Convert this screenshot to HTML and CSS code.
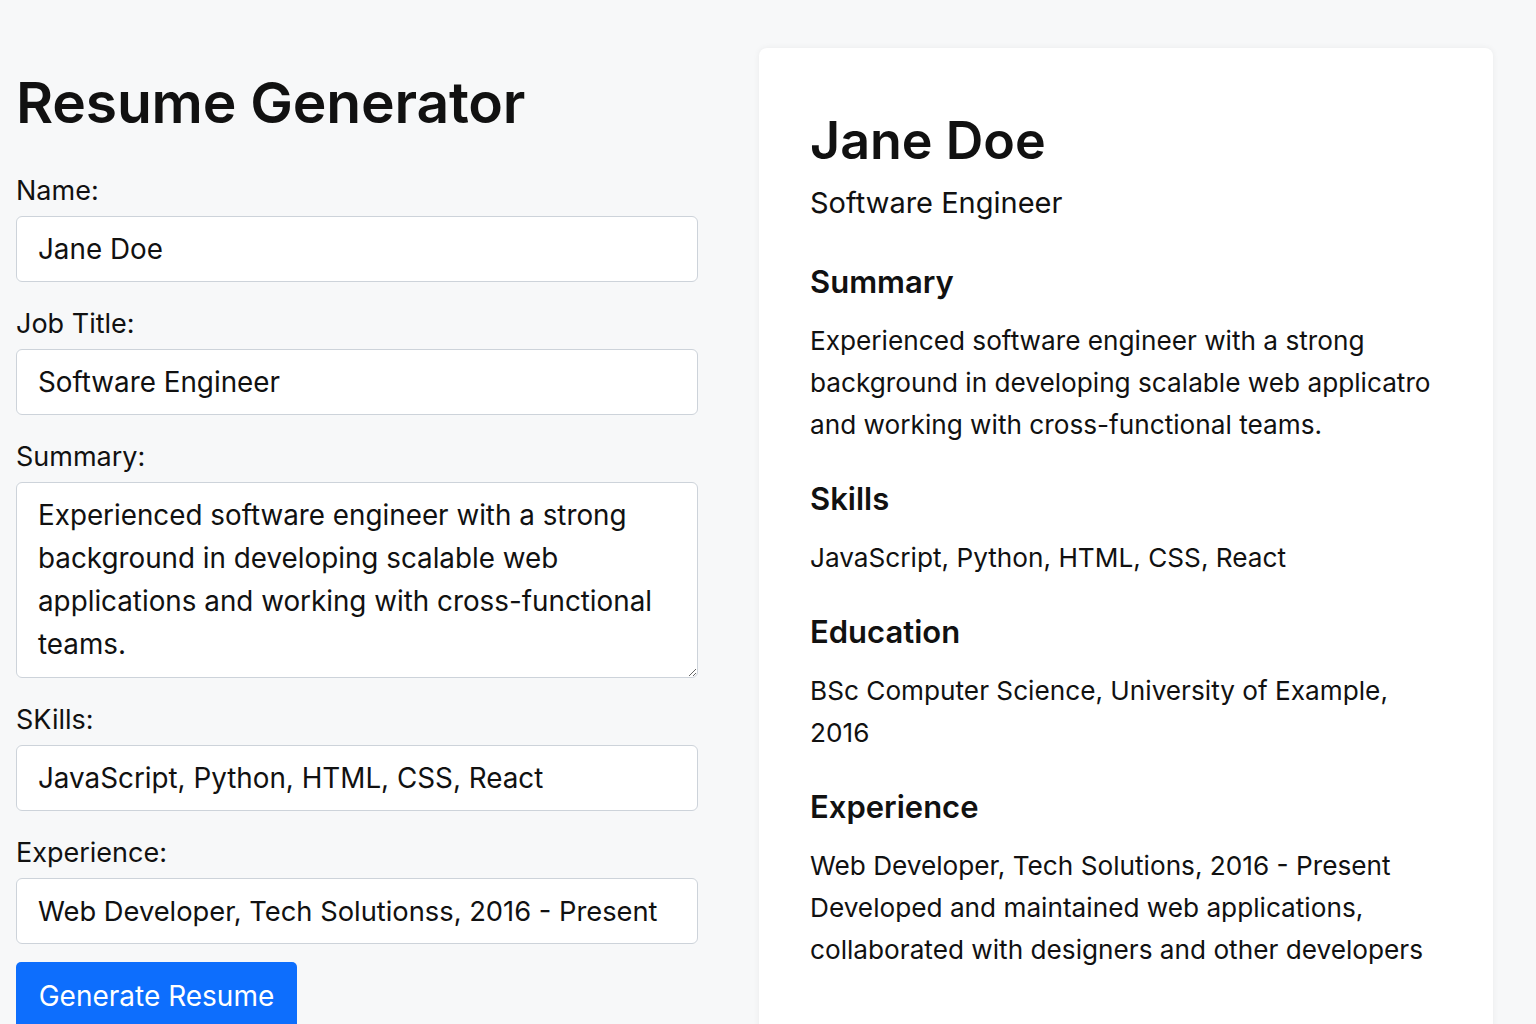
FILE: index.html
```html
<!DOCTYPE html>
<html lang="en">
<head>
<meta charset="utf-8">
<title>Resume Generator</title>
<link rel="stylesheet" href="styles.css">
</head>
<body>
<div class="page">
  <section class="editor">
    <h1 class="title">Resume Generator</h1>
    <form class="form">
      <div class="field">
        <label class="label">Name:</label>
        <input class="input" type="text" value="Jane Doe">
      </div>
      <div class="field">
        <label class="label">Job Title:</label>
        <input class="input" type="text" value="Software Engineer">
      </div>
      <div class="field">
        <label class="label">Summary:</label>
        <textarea class="input textarea">Experienced software engineer with a strong background in developing scalable web applications and working with cross-functional teams.</textarea>
      </div>
      <div class="field">
        <label class="label">SKills:</label>
        <input class="input" type="text" value="JavaScript, Python, HTML, CSS, React">
      </div>
      <div class="field">
        <label class="label">Experience:</label>
        <input class="input input-exp" type="text" value="Web Developer, Tech Solutionss, 2016 - Present">
      </div>
      <button class="button" type="button">Generate Resume</button>
    </form>
  </section>
  <section class="card">
    <h2 class="name">Jane Doe</h2>
    <p class="role">Software Engineer</p>
    <h3 class="heading">Summary</h3>
    <p class="text">Experienced software engineer with a strong background in developing scalable web applicatro and working with cross-functional teams.</p>
    <h3 class="heading">Skills</h3>
    <p class="text">JavaScript, Python, HTML, CSS, React</p>
    <h3 class="heading">Education</h3>
    <p class="text">BSc Computer Science, University of Example, 2016</p>
    <h3 class="heading">Experience</h3>
    <p class="text">Web Developer, Tech Solutions, 2016 - Present<br>Developed and maintained web applications, collaborated with designers and other developers</p>
  </section>
</div>
</body>
</html>
```

FILE: styles.css
```css
* { box-sizing: border-box; }
html, body { margin: 0; padding: 0; }
body {
  background: #f7f8f9;
  font-family: Inter, "Noto Sans", sans-serif;
  color: #111;
  height: 1024px;
  overflow: hidden;
}
.page {
  display: flex;
  align-items: flex-start;
  gap: 61px;
  padding: 48px 0 0 16px;
}
.editor {
  width: 682px;
  flex: none;
}
.title {
  margin: 22px 0 0;
  font-size: 57px;
  font-weight: 600;
  line-height: 66px;
  letter-spacing: -0.2px;
}
.form {
  display: flex;
  flex-direction: column;
  margin-top: 38px;
}
.field {
  display: flex;
  flex-direction: column;
  margin-bottom: 25px;
}
.label {
  font-size: 27px;
  line-height: 34px;
  margin-bottom: 8px;
}
.input {
  font-family: inherit;
  font-size: 27.8px;
  color: #111;
  height: 66px;
  padding: 0 21px;
  background: #fff;
  border: 1px solid #cdd3da;
  border-radius: 6px;
  outline: none;
}
.input-exp {
  font-size: 27.3px;
}
.textarea {
  height: 196px;
  padding: 11px 21px;
  line-height: 43px;
  resize: vertical;
}
.button {
  align-self: flex-start;
  margin-top: -7px;
  width: 281px;
  height: 72px;
  padding: 0 0 4px;
  background: #0d6efd;
  color: #fff;
  border: none;
  border-radius: 5px;
  font-family: inherit;
  font-size: 28px;
}
.card {
  width: 734px;
  flex: none;
  height: 1000px;
  background: #fff;
  border-radius: 8px;
  box-shadow: 0 0 6px rgba(0, 0, 0, 0.06);
  padding: 60px 40px 0 51px;
}
.name {
  margin: 0;
  font-size: 52px;
  font-weight: 600;
  line-height: 66px;
}
.role {
  margin: 7px 0 36px;
  font-size: 29px;
  line-height: 44px;
}
.heading {
  margin: 0 0 17px;
  font-size: 31px;
  font-weight: 600;
  line-height: 42px;
}
.text {
  margin: 0 0 32px;
  font-size: 26.2px;
  line-height: 42px;
}
```
